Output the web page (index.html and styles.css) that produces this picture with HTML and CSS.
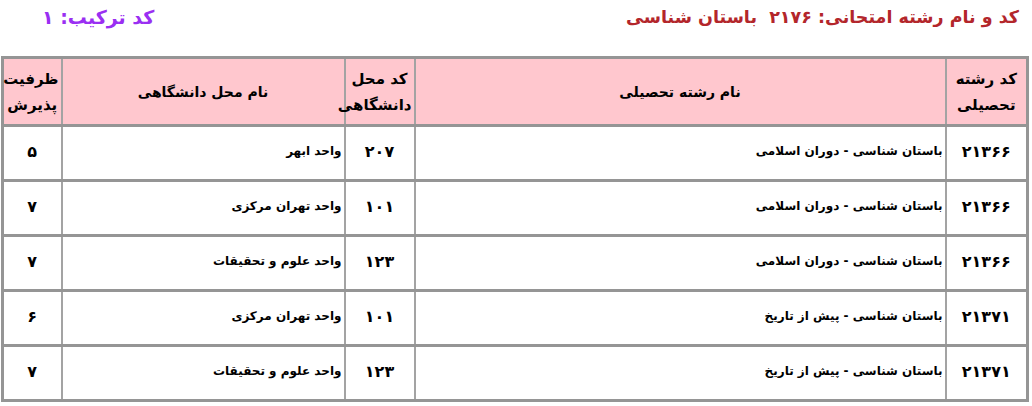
FILE: index.html
```html
<!DOCTYPE html>
<html lang="fa" dir="rtl">
<head>
<meta charset="utf-8">
<link rel="stylesheet" href="styles.css">
</head>
<body>
<div class="page">
  <div class="titles">
    <div class="title-main">کد و نام رشته امتحانی: ۲۱۷۶&nbsp;&nbsp;باستان شناسی</div>
    <div class="title-combo">کد ترکیب: ۱</div>
  </div>
  <table class="grid">
    <colgroup>
      <col class="c-code">
      <col class="c-field">
      <col class="c-uni">
      <col class="c-uniname">
      <col class="c-cap">
    </colgroup>
    <thead>
      <tr>
        <th class="wrap">کد رشته<br>تحصیلی</th>
        <th>نام رشته تحصیلی</th>
        <th class="wrap">کد محل<br>دانشگاهی</th>
        <th>نام محل دانشگاهی</th>
        <th class="wrap">ظرفیت<br>پذیرش</th>
      </tr>
    </thead>
    <tbody>
      <tr><td class="num">۲۱۳۶۶</td><td class="txt">باستان شناسی - دوران اسلامی</td><td class="num">۲۰۷</td><td class="txt">واحد ابهر</td><td class="num">۵</td></tr>
      <tr><td class="num">۲۱۳۶۶</td><td class="txt">باستان شناسی - دوران اسلامی</td><td class="num">۱۰۱</td><td class="txt">واحد تهران مرکزی</td><td class="num">۷</td></tr>
      <tr><td class="num">۲۱۳۶۶</td><td class="txt">باستان شناسی - دوران اسلامی</td><td class="num">۱۲۳</td><td class="txt">واحد علوم و تحقیقات</td><td class="num">۷</td></tr>
      <tr><td class="num">۲۱۳۷۱</td><td class="txt">باستان شناسی - پیش از تاریخ</td><td class="num">۱۰۱</td><td class="txt">واحد تهران مرکزی</td><td class="num">۶</td></tr>
      <tr><td class="num">۲۱۳۷۱</td><td class="txt">باستان شناسی - پیش از تاریخ</td><td class="num">۱۲۳</td><td class="txt">واحد علوم و تحقیقات</td><td class="num">۷</td></tr>
    </tbody>
  </table>
</div>
</body>
</html>
```

FILE: styles.css
```css
html, body {
  margin: 0;
  padding: 0;
  background: #ffffff;
}

body {
  font-family: "DejaVu Sans", "Noto Sans", sans-serif;
  color: #000;
}

.page {
  padding: 0 3px 0 4px;
}

.titles {
  display: flex;
  justify-content: space-between;
  align-items: center;
  height: 34px;
  padding: 0 10px 0 38px;
  margin-bottom: 22px;
}

.title-main {
  color: #b3262b;
  font-weight: bold;
  font-size: 17.5px;
}

.title-combo {
  color: #9a2ff2;
  font-weight: bold;
  font-size: 19px;
}

.grid {
  width: 1025px;
  border-collapse: collapse;
  table-layout: fixed;
  border: 3px solid #959595;
}

.c-code { width: 82px; }
.c-field { width: 531px; }
.c-uni { width: 70px; }
.c-uniname { width: 283px; }
.c-cap { width: 59px; }

.grid th {
  background: #ffc7ce;
  font-weight: bold;
  font-size: 14px;
  line-height: 24px;
  height: 65px;
  padding: 0 2px;
  border-left: 2px solid #a3a3a3;
  border-bottom: 3px solid #959595;
  text-align: center;
  vertical-align: middle;
}

.grid th.wrap {
  font-size: 15px;
  line-height: 26px;
}

.grid td {
  height: 48px;
  font-weight: bold;
  font-size: 12px;
  padding: 0 2px 4px 2px;
  border-left: 2px solid #a3a3a3;
  border-bottom: 3px solid #959595;
  vertical-align: middle;
}

.grid td.num {
  text-align: center;
  font-size: 16px;
}

.grid td.txt {
  text-align: right;
}
```
